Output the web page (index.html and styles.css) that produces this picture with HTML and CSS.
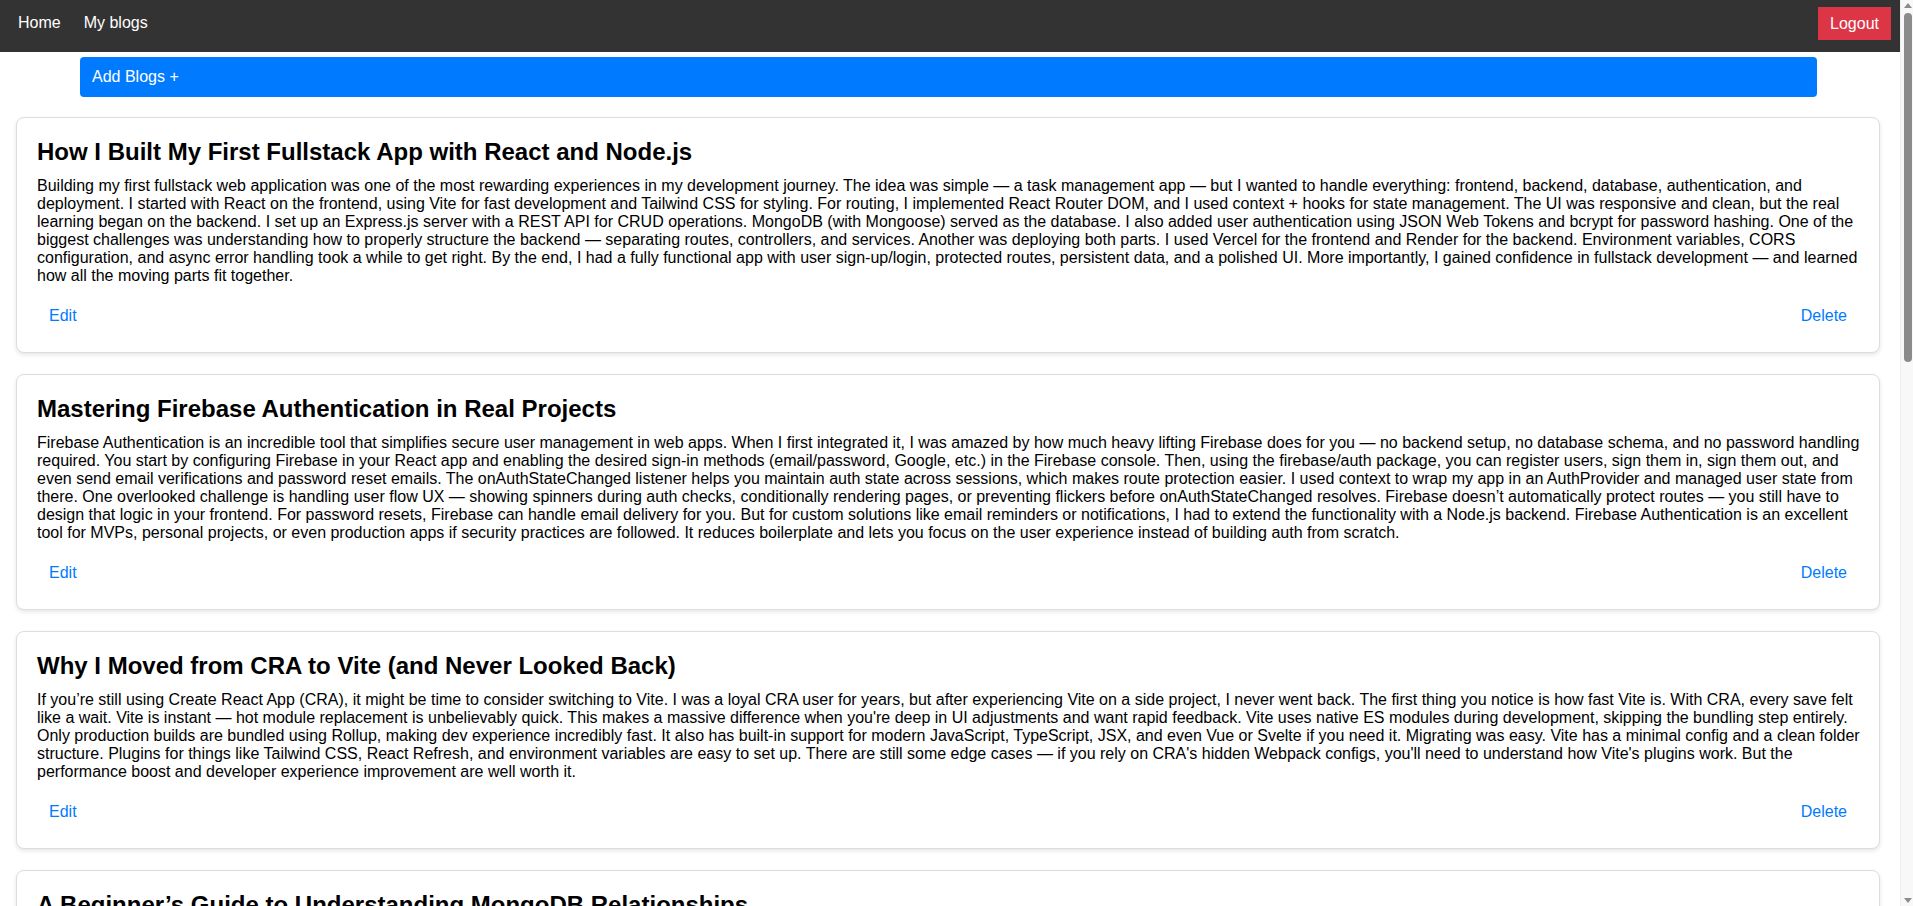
FILE: index.html
```html
<!DOCTYPE html>
<html lang="en">
<head>
<meta charset="utf-8">
<title>My Blogs</title>
<link rel="stylesheet" href="styles.css">
</head>
<body>
<div class="page">
<nav class="navbar">
  <div class="nav-links">
    <a class="nav-link" href="#">Home</a>
    <a class="nav-link" href="#">My blogs</a>
  </div>
  <button class="logout-btn">Logout</button>
</nav>

<button class="add-blog">Add Blogs +</button>

<main class="blog-list">
  <article class="blog-card">
    <h2 class="blog-title">How I Built My First Fullstack App with React and Node.js</h2>
    <p class="blog-content">Building my first fullstack web application was one of the most rewarding experiences in my development journey. The idea was simple — a task management app — but I wanted to handle everything: frontend, backend, database, authentication, and deployment. I started with React on the frontend, using Vite for fast development and Tailwind CSS for styling. For routing, I implemented React Router DOM, and I used context + hooks for state management. The UI was responsive and clean, but the real learning began on the backend. I set up an Express.js server with a REST API for CRUD operations. MongoDB (with Mongoose) served as the database. I also added user authentication using JSON Web Tokens and bcrypt for password hashing. One of the biggest challenges was understanding how to properly structure the backend — separating routes, controllers, and services. Another was deploying both parts. I used Vercel for the frontend and Render for the backend. Environment variables, CORS configuration, and async error handling took a while to get right. By the end, I had a fully functional app with user sign-up/login, protected routes, persistent data, and a polished UI. More importantly, I gained confidence in fullstack development — and learned how all the moving parts fit together.</p>
    <div class="card-actions">
      <button class="link-btn">Edit</button>
      <button class="link-btn">Delete</button>
    </div>
  </article>

  <article class="blog-card">
    <h2 class="blog-title">Mastering Firebase Authentication in Real Projects</h2>
    <p class="blog-content">Firebase Authentication is an incredible tool that simplifies secure user management in web apps. When I first integrated it, I was amazed by how much heavy lifting Firebase does for you — no backend setup, no database schema, and no password handling required. You start by configuring Firebase in your React app and enabling the desired sign-in methods (email/password, Google, etc.) in the Firebase console. Then, using the firebase/auth package, you can register users, sign them in, sign them out, and even send email verifications and password reset emails. The onAuthStateChanged listener helps you maintain auth state across sessions, which makes route protection easier. I used context to wrap my app in an AuthProvider and managed user state from there. One overlooked challenge is handling user flow UX — showing spinners during auth checks, conditionally rendering pages, or preventing flickers before onAuthStateChanged resolves. Firebase doesn’t automatically protect routes — you still have to design that logic in your frontend. For password resets, Firebase can handle email delivery for you. But for custom solutions like email reminders or notifications, I had to extend the functionality with a Node.js backend. Firebase Authentication is an excellent tool for MVPs, personal projects, or even production apps if security practices are followed. It reduces boilerplate and lets you focus on the user experience instead of building auth from scratch.</p>
    <div class="card-actions">
      <button class="link-btn">Edit</button>
      <button class="link-btn">Delete</button>
    </div>
  </article>

  <article class="blog-card">
    <h2 class="blog-title">Why I Moved from CRA to Vite (and Never Looked Back)</h2>
    <p class="blog-content">If you’re still using Create React App (CRA), it might be time to consider switching to Vite. I was a loyal CRA user for years, but after experiencing Vite on a side project, I never went back. The first thing you notice is how fast Vite is. With CRA, every save felt like a wait. Vite is instant — hot module replacement is unbelievably quick. This makes a massive difference when you're deep in UI adjustments and want rapid feedback. Vite uses native ES modules during development, skipping the bundling step entirely. Only production builds are bundled using Rollup, making dev experience incredibly fast. It also has built-in support for modern JavaScript, TypeScript, JSX, and even Vue or Svelte if you need it. Migrating was easy. Vite has a minimal config and a clean folder structure. Plugins for things like Tailwind CSS, React Refresh, and environment variables are easy to set up. There are still some edge cases — if you rely on CRA's hidden Webpack configs, you'll need to understand how Vite's plugins work. But the performance boost and developer experience improvement are well worth it.</p>
    <div class="card-actions">
      <button class="link-btn">Edit</button>
      <button class="link-btn">Delete</button>
    </div>
  </article>

  <article class="blog-card">
    <h2 class="blog-title">A Beginner’s Guide to Understanding MongoDB Relationships</h2>
    <p class="blog-content">When I started working with MongoDB, one of the most confusing parts was figuring out how to model relationships between data. Coming from SQL, I was used to foreign keys and joins, but MongoDB is a document database, so things work a bit differently. There are two main approaches: embedding and referencing. Embedding means storing related data inside a single document — great for data that is always read together, like a blog post and its comments. Referencing means storing the ObjectId of another document, which is better for large or frequently changing data. With Mongoose, you can use populate() to resolve references, which feels a lot like a join. The key lesson is to design your schema around how your app reads and writes data, not around how the data looks on paper.</p>
    <div class="card-actions">
      <button class="link-btn">Edit</button>
      <button class="link-btn">Delete</button>
    </div>
  </article>

  <article class="blog-card">
    <h2 class="blog-title">Deploying a MERN App on Render and Vercel</h2>
    <p class="blog-content">Deploying a fullstack app for the first time can feel overwhelming, but splitting the frontend and backend across two platforms made things much simpler for me. I hosted the React frontend on Vercel and the Express backend on Render. The biggest gotchas were environment variables, CORS settings, and making sure the frontend pointed at the correct API URL in production. Once those were sorted out, every push to GitHub triggered an automatic deploy, which made iterating on features fast and painless.</p>
    <div class="card-actions">
      <button class="link-btn">Edit</button>
      <button class="link-btn">Delete</button>
    </div>
  </article>

  <article class="blog-card">
    <h2 class="blog-title">State Management in React: Context vs Redux</h2>
    <p class="blog-content">Choosing a state management approach is one of the first architectural decisions in a React project. For small and medium apps, the built-in Context API combined with useReducer is often enough. It avoids extra dependencies and keeps the code easy to follow. Redux, especially with Redux Toolkit, shines when state is large, shared across many components, or needs powerful dev tools for debugging. My rule of thumb: start simple with context, and reach for Redux only when the pain of prop drilling and scattered state becomes real.</p>
    <div class="card-actions">
      <button class="link-btn">Edit</button>
      <button class="link-btn">Delete</button>
    </div>
  </article>

  <article class="blog-card">
    <h2 class="blog-title">Building Responsive Layouts with Tailwind CSS</h2>
    <p class="blog-content">Tailwind CSS changed the way I write styles. Instead of switching between files and inventing class names, I compose utilities directly in my markup. Responsive design becomes straightforward with breakpoint prefixes like md: and lg:, and the design system keeps spacing and colors consistent across the whole app. It took a few days to get used to the long class lists, but the productivity boost has been well worth it.</p>
    <div class="card-actions">
      <button class="link-btn">Edit</button>
      <button class="link-btn">Delete</button>
    </div>
  </article>

  <article class="blog-card">
    <h2 class="blog-title">Securing Express APIs with JWT</h2>
    <p class="blog-content">JSON Web Tokens are a simple way to protect API routes in an Express application. After a user logs in, the server signs a token containing the user id and sends it back to the client. Every protected request then includes the token in the Authorization header, and a small middleware verifies it before the route handler runs. Keeping secrets in environment variables and setting sensible expiry times are the two habits that make this approach safe in production.</p>
    <div class="card-actions">
      <button class="link-btn">Edit</button>
      <button class="link-btn">Delete</button>
    </div>
  </article>
</main>
</div>

<div class="scrollbar" aria-hidden="true">
  <span class="sb-arrow sb-up"></span>
  <span class="sb-thumb"></span>
  <span class="sb-arrow sb-down"></span>
</div>
</body>
</html>
```

FILE: styles.css
```css
* {
  box-sizing: border-box;
}

body {
  margin: 0;
  font-family: "Liberation Sans", Arial, sans-serif;
  font-size: 16px;
  color: #000;
  background: #fff;
}

.page {
  margin-right: 13px;
}

.navbar {
  display: flex;
  justify-content: space-between;
  align-items: flex-start;
  background: #333333;
  height: 52px;
  padding: 7px 9px 0 18px;
}

.nav-links {
  display: flex;
  gap: 23px;
  padding-top: 7px;
}

.nav-link {
  color: #fff;
  text-decoration: none;
  font-size: 16px;
}

.logout-btn {
  background: #dc3545;
  color: #fff;
  border: none;
  font-family: inherit;
  font-size: 16px;
  line-height: 18.4px;
  padding: 8px 12px 7px;
  width: 73px;
  height: 33px;
  cursor: pointer;
}

.add-blog {
  display: block;
  width: calc(100% - 163px);
  margin: 5px 0 0 80px;
  height: 40px;
  padding: 0 12px;
  text-align: left;
  background: #007bff;
  color: #fff;
  border: none;
  border-radius: 4px;
  font-family: inherit;
  font-size: 16px;
  cursor: pointer;
}

.blog-list {
  padding: 20px 20px 0 16px;
}

.blog-card {
  border: 1px solid #ddd;
  border-radius: 8px;
  padding: 20px;
  margin-bottom: 21px;
  box-shadow: 0 2px 4px rgba(0, 0, 0, 0.1);
  background: #fff;
}

.blog-title {
  margin: 0 0 10.5px;
  font-size: 24px;
  font-weight: bold;
}

.blog-content {
  margin: 0 -6px 14.5px 0;
  line-height: normal;
}

.card-actions {
  display: flex;
  justify-content: space-between;
}

.link-btn {
  background: none;
  border: none;
  color: #007bff;
  font-family: inherit;
  font-size: 16px;
  padding: 8px 12px 7px;
  cursor: pointer;
}

/* simulated browser scrollbar (overlays the right edge of the viewport) */
.scrollbar {
  position: fixed;
  top: 0;
  right: 0;
  width: 13px;
  height: 100vh;
  background: #f8f8f8;
  border-left: 1px solid #f0f0f0;
}

.sb-thumb {
  position: absolute;
  top: 13px;
  left: 3px;
  width: 8px;
  height: 349px;
  background: #8b8b8b;
  border-radius: 4px;
}

.sb-arrow {
  position: absolute;
  left: 3px;
  width: 0;
  height: 0;
  border-left: 4px solid transparent;
  border-right: 4px solid transparent;
}

.sb-up {
  top: 3px;
  border-bottom: 5px solid #8b8b8b;
}

.sb-down {
  bottom: 3px;
  border-top: 5px solid #8b8b8b;
}
```
